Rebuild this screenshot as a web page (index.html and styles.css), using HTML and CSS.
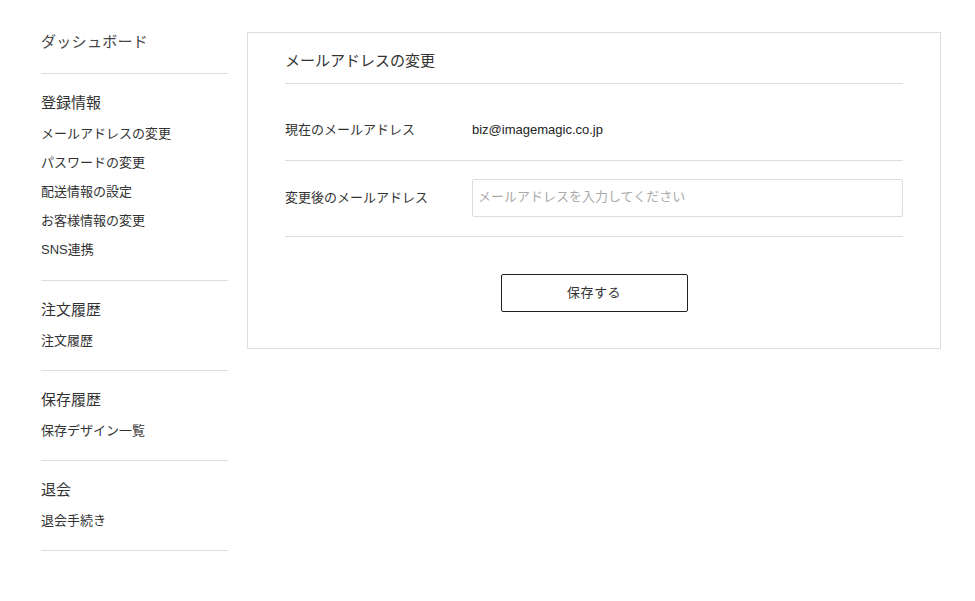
FILE: index.html
```html
<!DOCTYPE html>
<html lang="ja">
<head>
    <meta charset="UTF-8">
    <meta name="viewport" content="width=device-width, initial-scale=1.0">
    <title>メールアドレスの変更</title>
    <link rel="stylesheet" href="styles.css">
</head>
<body>
    <div class="page">
        <nav class="sidebar">
            <a class="side-top" href="#">ダッシュボード</a>

            <div class="side-group">
                <div class="side-head">登録情報</div>
                <a class="side-link" href="#">メールアドレスの変更</a>
                <a class="side-link" href="#">パスワードの変更</a>
                <a class="side-link" href="#">配送情報の設定</a>
                <a class="side-link" href="#">お客様情報の変更</a>
                <a class="side-link" href="#">SNS連携</a>
            </div>

            <div class="side-group">
                <div class="side-head">注文履歴</div>
                <a class="side-link" href="#">注文履歴</a>
            </div>

            <div class="side-group">
                <div class="side-head">保存履歴</div>
                <a class="side-link" href="#">保存デザイン一覧</a>
            </div>

            <div class="side-group">
                <div class="side-head">退会</div>
                <a class="side-link" href="#">退会手続き</a>
            </div>
        </nav>

        <main class="card">
            <h1 class="card-title">メールアドレスの変更</h1>

            <div class="row row-current">
                <div class="row-label">現在のメールアドレス</div>
                <div class="row-value">biz@imagemagic.co.jp</div>
            </div>

            <div class="row row-edit">
                <label class="row-label" for="newMail">変更後のメールアドレス</label>
                <input class="text-input" id="newMail" type="email" placeholder="メールアドレスを入力してください">
            </div>

            <div class="actions">
                <button class="btn-save" type="button">保存する</button>
            </div>
        </main>
    </div>
</body>
</html>
```

FILE: styles.css
```css
body {
    margin: 0;
    padding: 0;
    background: #fff;
    color: #333;
    font-family: 'Liberation Sans', 'Noto Sans CJK JP', sans-serif;
}

a {
    color: inherit;
    text-decoration: none;
}

.page {
    display: flex;
    align-items: flex-start;
    gap: 19px;
    padding: 32px 34px 0 41px;
}

/* サイドメニュー */
.sidebar {
    width: 187px;
    flex-shrink: 0;
    display: flex;
    flex-direction: column;
}

.side-top {
    display: block;
    font-size: 15px;
    line-height: 20px;
    letter-spacing: 0.3px;
    color: #444;
    padding-bottom: 21px;
    border-bottom: 1px solid #ddd;
}

.side-group {
    display: flex;
    flex-direction: column;
    padding: 14px 0 16px;
    border-bottom: 1px solid #ddd;
}

.side-group:first-of-type {
    padding-bottom: 17px;
}

.side-head {
    font-size: 15px;
    line-height: 30px;
    color: #333;
}

.side-link {
    font-size: 13px;
    line-height: 29px;
    padding-top: 1px;
    margin-bottom: -1px;
    color: #333;
}

/* メイン */
.card {
    flex: 1;
    border: 1px solid #ddd;
    padding: 16px 37px 36px;
}

.card-title {
    margin: 0;
    font-size: 15px;
    font-weight: normal;
    line-height: 24px;
    color: #333;
    padding-bottom: 10px;
    border-bottom: 1px solid #ddd;
}

.row {
    display: flex;
    align-items: center;
    padding: 18px 0 19px;
    border-bottom: 1px solid #ddd;
}

.row-current {
    padding: 36px 0 20px;
    line-height: 20px;
}

.row-label {
    width: 187px;
    flex-shrink: 0;
    font-size: 13px;
    color: #333;
}

.row-edit .row-label {
    margin-top: -4px;
}

.row-value {
    font-size: 13px;
    color: #222;
}

.text-input {
    flex: 1;
    height: 38px;
    box-sizing: border-box;
    border: 1px solid #ddd;
    border-radius: 2px;
    padding: 0 5px 3px;
    font-family: inherit;
    font-size: 13px;
    color: #333;
    outline: none;
}

.text-input::placeholder {
    color: #aaa;
}

.actions {
    display: flex;
    justify-content: center;
    padding-top: 37px;
}

.btn-save {
    width: 187px;
    height: 38px;
    padding: 0 0 3px;
    background: #fff;
    border: 1px solid #222;
    border-radius: 2px;
    font-family: inherit;
    font-size: 13px;
    letter-spacing: 0.5px;
    color: #333;
    cursor: pointer;
}
```
